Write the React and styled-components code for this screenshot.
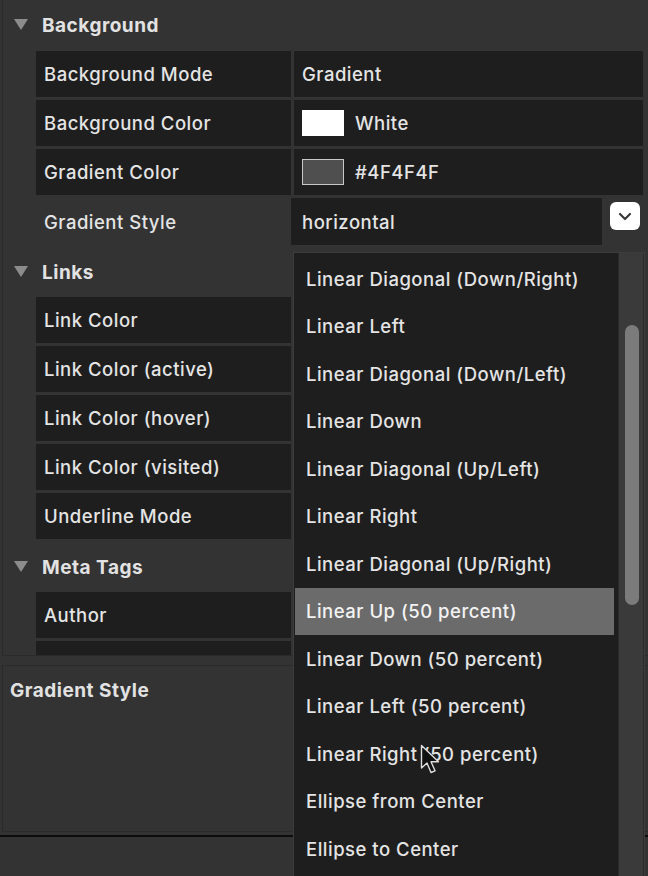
import React from "react";
import styled, { createGlobalStyle } from "styled-components";

const GlobalStyle = createGlobalStyle`
  html, body {
    margin: 0;
    padding: 0;
    background: #333333;
    overflow: hidden;
  }
  body {
    font-family: Inter, "Noto Sans", "Liberation Sans", sans-serif;
    color: #e4e4e4;
    -webkit-font-smoothing: antialiased;
  }
`;

const Screen = styled.div`
  position: relative;
  width: 648px;
  height: 876px;
  display: flex;
  flex-direction: column;
  overflow: hidden;
  background: #333333;
`;

const Inspector = styled.div`
  height: 656px;
  margin-left: 2px;
  border-left: 1px solid #2a2a2a;
  border-bottom: 1px solid #2a2a2a;
  overflow: hidden;
  padding-right: 5px;
  box-sizing: border-box;
`;

const SectionHeader = styled.div`
  height: ${({ first }) => (first ? "51px" : "50px")};
  display: flex;
  align-items: center;
  padding-left: 11px;
  gap: 14px;
  font-weight: 700;
  font-size: 19px;
  letter-spacing: 0.5px;
  color: #e2e2e2;
`;

const Triangle = styled.span`
  width: 0;
  height: 0;
  border-left: 7px solid transparent;
  border-right: 7px solid transparent;
  border-top: 11px solid #8c8c8c;
  margin-top: -2px;
`;

const Row = styled.div`
  display: grid;
  grid-template-columns: 255px 1fr;
  column-gap: 3px;
  height: 46px;
  margin: 0 0 3px 33px;
`;

const Cell = styled.div`
  background: ${({ bare }) => (bare ? "transparent" : "#1e1e1e")};
  display: flex;
  align-items: center;
  gap: 11px;
  padding-left: 8px;
  font-size: 18.5px;
  font-weight: 500;
  letter-spacing: 0.5px;
  white-space: nowrap;
  overflow: hidden;
`;

const Swatch = styled.span`
  width: 40px;
  height: 24px;
  background: ${({ color }) => color};
  border: 1px solid ${({ color }) => (color === "#ffffff" ? "#ffffff" : "#c8c8c8")};
`;

const SelectRow = styled.div`
  display: flex;
  align-items: flex-start;
  height: 48px;
  margin-left: -3px;
`;

const SelectValue = styled.div`
  width: 311px;
  height: 47px;
  background: #1e1e1e;
  display: flex;
  align-items: center;
  padding-left: 11px;
  box-sizing: border-box;
  font-size: 18.5px;
  font-weight: 500;
  letter-spacing: 0.5px;
`;

const ChevronButton = styled.div`
  width: 30px;
  height: 28px;
  margin: 4px 0 0 8px;
  background: #ffffff;
  border-radius: 6px;
  display: flex;
  align-items: center;
  justify-content: center;
`;

const HelpPanel = styled.div`
  margin: 9px 0 0 2px;
  height: 167px;
  border-top: 1px solid #2a2a2a;
  border-left: 1px solid #2a2a2a;
  border-bottom: 1px solid #2a2a2a;
  padding: 13px 0 0 7px;
  box-sizing: border-box;
`;

const HelpTitle = styled.div`
  font-weight: 700;
  font-size: 19px;
  letter-spacing: 0.5px;
  color: #e2e2e2;
`;

const Divider = styled.div`
  height: 2px;
  margin-top: 3px;
  background: #0c0c0c;
`;

const Footer = styled.div`
  flex: 1;
  background: #333333;
`;

const Dropdown = styled.div`
  position: absolute;
  top: 252px;
  left: 293px;
  width: 352px;
  height: 640px;
  display: flex;
  background: #1e1e1e;
  border: 1px solid #3c3c3c;
  box-sizing: border-box;
`;

const OptionList = styled.div`
  flex: 1;
  padding: 2px 4px 0 1px;
`;

const Option = styled.div`
  height: 47.5px;
  display: flex;
  align-items: center;
  padding-left: 11px;
  font-size: 18.5px;
  font-weight: 500;
  letter-spacing: 0.5px;
  background: ${({ active }) => (active ? "#6b6b6b" : "transparent")};
  color: ${({ active }) => (active ? "#f2f2f2" : "#e4e4e4")};
  white-space: nowrap;
`;

const ScrollTrack = styled.div`
  width: 26px;
  background: #3a3a3a;
  border-left: 1px solid #2c2c2c;
  border-right: 1px solid #2c2c2c;
  box-sizing: border-box;
  padding: 72px 0 0 6px;
`;

const ScrollThumb = styled.div`
  width: 14px;
  height: 280px;
  border-radius: 7px;
  background: #7b7b7b;
`;

const Cursor = styled.svg`
  position: absolute;
  left: 420px;
  top: 744px;
`;

const options = [
  "Linear Diagonal (Down/Right)",
  "Linear Left",
  "Linear Diagonal (Down/Left)",
  "Linear Down",
  "Linear Diagonal (Up/Left)",
  "Linear Right",
  "Linear Diagonal (Up/Right)",
  "Linear Up (50 percent)",
  "Linear Down (50 percent)",
  "Linear Left (50 percent)",
  "Linear Right (50 percent)",
  "Ellipse from Center",
  "Ellipse to Center",
];

const LabelRow = ({ label, children }) => (
  <Row>
    <Cell>{label}</Cell>
    <Cell>{children}</Cell>
  </Row>
);

export default function App() {
  return (
    <Screen>
      <GlobalStyle />
      <Inspector>
        <SectionHeader first>
          <Triangle />
          Background
        </SectionHeader>
        <LabelRow label="Background Mode">Gradient</LabelRow>
        <LabelRow label="Background Color">
          <Swatch color="#ffffff" />
          White
        </LabelRow>
        <LabelRow label="Gradient Color">
          <Swatch color="#4f4f4f" />
          #4F4F4F
        </LabelRow>
        <Row>
          <Cell bare>Gradient Style</Cell>
          <SelectRow>
            <SelectValue>horizontal</SelectValue>
            <ChevronButton>
              <svg width="14" height="9" viewBox="0 0 14 9">
                <path d="M2 2 L7 7 L12 2" fill="none" stroke="#3a3a3a" strokeWidth="2.2" strokeLinecap="round" strokeLinejoin="round" />
              </svg>
            </ChevronButton>
          </SelectRow>
        </Row>

        <SectionHeader>
          <Triangle />
          Links
        </SectionHeader>
        <LabelRow label="Link Color" />
        <LabelRow label="Link Color (active)" />
        <LabelRow label="Link Color (hover)" />
        <LabelRow label="Link Color (visited)" />
        <LabelRow label="Underline Mode" />

        <SectionHeader>
          <Triangle />
          Meta Tags
        </SectionHeader>
        <LabelRow label="Author" />
        <LabelRow />
      </Inspector>

      <HelpPanel>
        <HelpTitle>Gradient Style</HelpTitle>
      </HelpPanel>
      <Divider />
      <Footer />

      <Dropdown>
        <OptionList>
          {options.map((o) => (
            <Option key={o} active={o === "Linear Up (50 percent)"}>
              {o}
            </Option>
          ))}
        </OptionList>
        <ScrollTrack>
          <ScrollThumb />
        </ScrollTrack>
      </Dropdown>

      <Cursor width="22" height="32" viewBox="0 0 22 32">
        <path d="M1.5 1.5 L1.5 24 L7 19 L11 28.5 L15 26.8 L11 17.8 L18.5 17.8 Z" fill="#111" stroke="#ddd" strokeWidth="1.4" strokeLinejoin="round" />
      </Cursor>
    </Screen>
  );
}
